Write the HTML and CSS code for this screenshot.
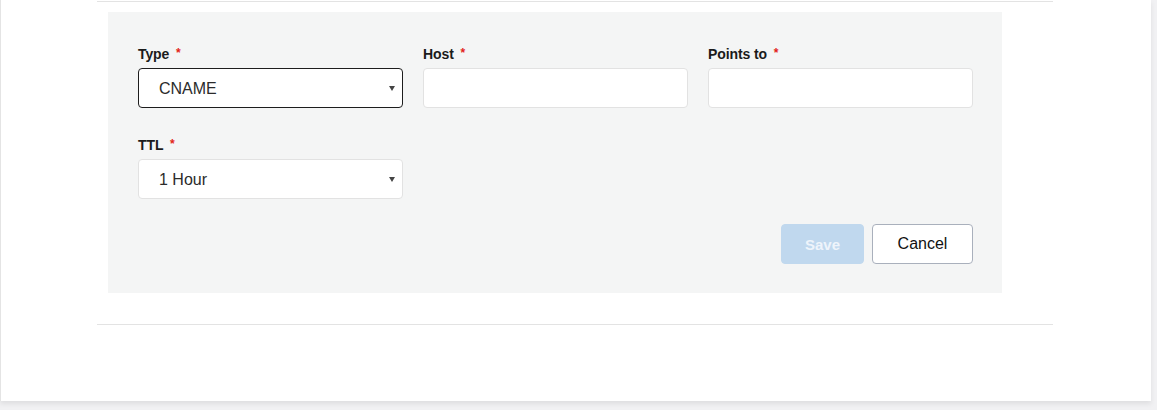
FILE: index.html
```html
<!DOCTYPE html>
<html>
<head>
<meta charset="utf-8">
<link rel="stylesheet" href="styles.css">
</head>
<body>
<div class="card">
  <div class="section">
    <form class="panel">
      <div class="grid">
        <div class="field">
          <label class="label">Type <span class="req">*</span></label>
          <div class="select-wrap">
            <select class="control select focused"><option>CNAME</option></select>
          </div>
        </div>
        <div class="field">
          <label class="label">Host <span class="req">*</span></label>
          <input class="control" type="text">
        </div>
        <div class="field">
          <label class="label">Points to <span class="req">*</span></label>
          <input class="control" type="text">
        </div>
        <div class="field">
          <label class="label">TTL <span class="req">*</span></label>
          <div class="select-wrap">
            <select class="control select"><option>1 Hour</option></select>
          </div>
        </div>
      </div>
      <div class="actions">
        <button type="button" class="btn btn-save" disabled>Save</button>
        <button type="button" class="btn btn-cancel">Cancel</button>
      </div>
    </form>
  </div>
</div>
</body>
</html>
```

FILE: styles.css
```css
html, body {
  margin: 0;
  padding: 0;
}
body {
  background: #f1f1f3;
  font-family: "Liberation Sans", Arial, sans-serif;
  color: #111;
  height: 410px;
  overflow: hidden;
}
.card {
  width: 1151px;
  height: 401px;
  background: #fff;
  border-left: 1px solid #e4e4e4;
  box-shadow: 0 3px 5px rgba(0, 0, 0, 0.08);
  padding-top: 1px;
  box-sizing: border-box;
}
.section {
  margin-left: 96px;
  width: 956px;
  border-top: 1px solid #e3e3e3;
  border-bottom: 1px solid #e3e3e3;
  padding: 10px 0 31px 11px;
  box-sizing: border-box;
}
.panel {
  width: 894px;
  height: 281px;
  box-sizing: border-box;
  background: #f4f5f5;
  padding: 31px 29px 0 30px;
  margin: 0;
}
.grid {
  display: grid;
  grid-template-columns: 265px 265px 265px;
  column-gap: 20px;
  row-gap: 26px;
}
.field {
  display: flex;
  flex-direction: column;
}
.label {
  font-size: 14px;
  font-weight: bold;
  line-height: 20px;
  color: #1b1b1b;
  margin-bottom: 4px;
  letter-spacing: -0.1px;
}
.req {
  color: #e2231a;
  font-size: 12px;
  vertical-align: 2px;
  margin-left: 3px;
}
.control {
  box-sizing: border-box;
  width: 265px;
  height: 40px;
  border: 1px solid #e2e2e2;
  border-radius: 4px;
  background: #fff;
  font-family: "Liberation Sans", Arial, sans-serif;
  font-size: 16px;
  color: #2b2b2b;
  padding: 0 20px;
  margin: 0;
  outline: none;
}
.select {
  appearance: none;
  -webkit-appearance: none;
}
.focused {
  border-color: #1d1d1d;
}
.select-wrap {
  position: relative;
  width: 265px;
}
.select-wrap::after {
  content: "";
  position: absolute;
  right: 8px;
  top: 18px;
  border-left: 3px solid transparent;
  border-right: 3px solid transparent;
  border-top: 5px solid #444;
  pointer-events: none;
}
.actions {
  display: flex;
  justify-content: flex-end;
  gap: 8px;
  margin-top: 25px;
  width: 835px;
}
.btn {
  height: 40px;
  box-sizing: border-box;
  border-radius: 4px;
  font-family: "Liberation Sans", Arial, sans-serif;
  font-size: 16px;
  padding: 0;
}
.btn-save {
  width: 83px;
  background: #c0d8ee;
  border: 1px solid #c0d8ee;
  color: #eef4fb;
  font-weight: bold;
  font-size: 15px;
}
.btn-cancel {
  width: 101px;
  background: #fff;
  border: 1px solid #a9b0bc;
  color: #111;
}
```
